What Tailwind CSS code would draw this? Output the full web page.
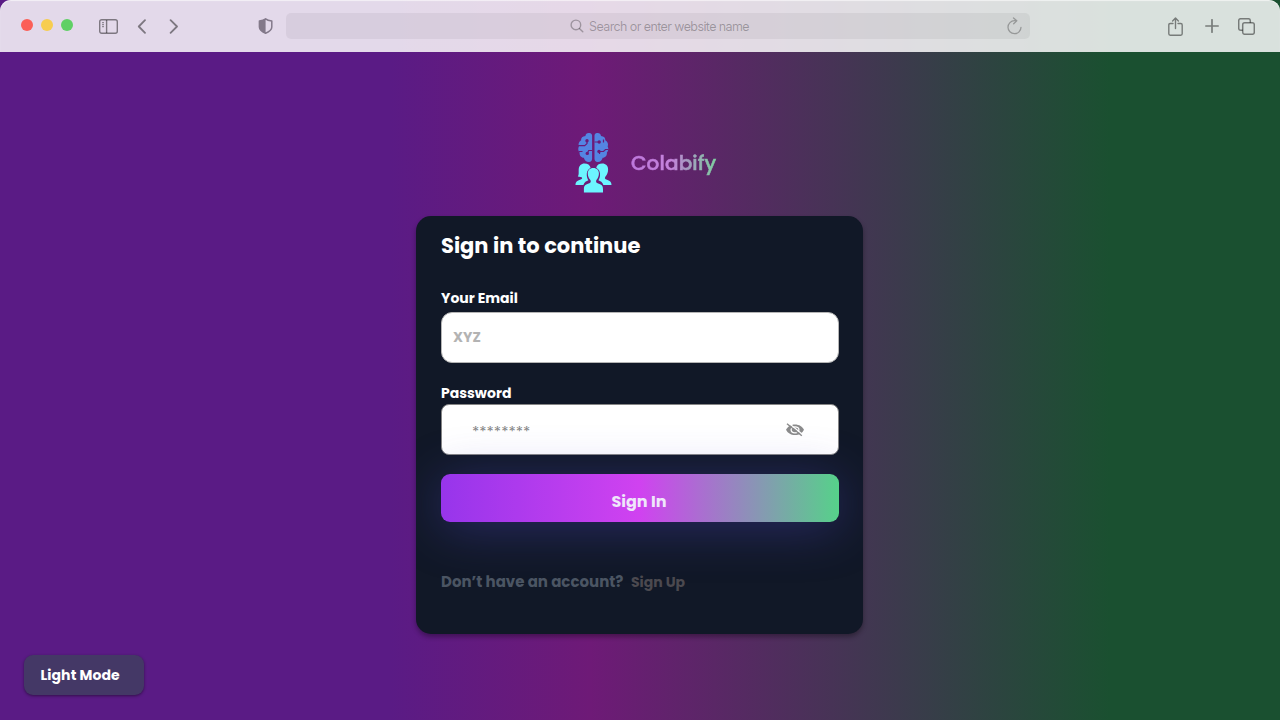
<!DOCTYPE html>
<html lang="en">
<head>
<meta charset="utf-8">
<title>Colabify</title>
<script src="https://cdn.jsdelivr.net/npm/@tailwindcss/browser@4"></script>
</head>
<body class="w-[1280px] h-[720px] overflow-hidden flex flex-col font-['Poppins','Inter',sans-serif] bg-[linear-gradient(90deg,#5a1b85_0px,#5a1b85_390px,#6e1a77_590px,#1a5030_1110px)]">
  <header class="h-[52px] shrink-0 flex items-center rounded-t-[11px] bg-[#fcfafc]/85 shadow-[inset_0_1px_1px_#ffffff99] text-black/45">
    <div class="flex gap-2 ml-[21px] mb-[3px]">
      <span class="size-3 rounded-full bg-[#fb5f57]"></span>
      <span class="size-3 rounded-full bg-[#f7cd50]"></span>
      <span class="size-3 rounded-full bg-[#5fd065]"></span>
    </div>
    <svg class="ml-[26px] w-[19px] h-[15px]" viewBox="0 0 19 15" fill="none" stroke="currentColor" stroke-width="1.4"><rect x=".7" y=".7" width="17.6" height="13.6" rx="2"/><path d="M7.6 1v13"/><path d="M3 3.7h2M3 5.7h2M3 7.7h2" stroke-width="1"/></svg>
    <svg class="ml-[19px] w-[9px] h-[15px]" viewBox="0 0 9 15" fill="none" stroke="currentColor" stroke-width="1.800" stroke-linecap="round" stroke-linejoin="round"><path d="M8 1.200 1.800 7.500 8 13.800"/></svg>
    <svg class="ml-[23px] w-[9px] h-[15px]" viewBox="0 0 9 15" fill="none" stroke="currentColor" stroke-width="1.800" stroke-linecap="round" stroke-linejoin="round"><path d="M1.600 1.200 8 7.500l-6.400 6.300"/></svg>
    <svg class="ml-[80px] w-[15px] h-[16px]" viewBox="-.6 0 15 16"><path d="M7 .8C5.600 1.900 3 2.600.8 2.900V9c0 3 3 4.900 6.200 6.300C10.200 13.900 13.200 12 13.200 9V2.900C11 2.600 8.400 1.900 7 .8Z" fill="none" stroke="#83798a" stroke-width="1.500" stroke-linejoin="round"/><path d="M7 .8C5.600 1.900 3 2.600.8 2.900V9c0 3 3 4.900 6.200 6.300Z" fill="#83798a"/></svg>
    <div class="ml-[13px] w-[744px] h-[26px] rounded-[5px] bg-black/5 flex items-center text-black/28">
      <svg class="ml-[284px] w-[14px] h-[14px]" viewBox="0 0 14 14" fill="none" stroke="currentColor" stroke-width="1.400" stroke-linecap="round"><circle cx="5.900" cy="5.900" r="4.800"/><path d="m9.400 9.400 3.400 3.400"/></svg>
      <span class="ml-[5px] mt-px w-[163px] whitespace-nowrap text-[12.500px] leading-4 font-normal font-['Inter',sans-serif] tracking-[-0.600px]">Search or enter website name</span>
      <svg class="ml-auto mr-[8px] w-[15px] h-[18px]" viewBox="0 0 15 18" fill="none" stroke="currentColor" stroke-width="1.300" stroke-linecap="round" stroke-linejoin="round"><path d="M14 10.300A6.500 6.500 0 1 1 7.500 3.700h2.200M6.500.9l3.300 2.800-3.100 3"/></svg>
    </div>
    <svg class="ml-[138px] w-[15px] h-[19px]" viewBox="0 0 15 19" fill="none" stroke="currentColor" stroke-width="1.400" stroke-linecap="round" stroke-linejoin="round"><path d="M5 6.500H2.200Q.8 6.500.8 7.900v8.900q0 1.400 1.400 1.400h10.600q1.400 0 1.400-1.400V7.900q0-1.400-1.400-1.400H10M7.500 11.500V1.200M4.600 3.900l2.900-2.900 2.900 2.900"/></svg>
    <svg class="ml-[22px] w-[14px] h-[14px]" viewBox="0 0 14 14" fill="none" stroke="currentColor" stroke-width="1.700" stroke-linecap="round"><path d="M7 .8v12.400M.8 7h12.400"/></svg>
    <svg class="ml-[19px] w-[17px] h-[17px]" viewBox="0 0 17 17" fill="none" stroke="currentColor" stroke-width="1.500"><rect x="4.700" y="4.700" width="11.600" height="11.600" rx="2"/><path d="M4.700 12.300H2.700q-2 0-2-2V2.700q0-2 2-2h7.600q2 0 2 2v2"/></svg>
  </header>

  <main class="flex-1 flex flex-col">
    <div class="h-[62px] mt-[79px] ml-[574px] flex">
      <svg class="w-[39px] h-[62px]" viewBox="0 0 39 62">
        <g fill="#5485e2">
          <path d="M18.100 4.500C18 2.500 16.300 1.600 14.700 2 12.800 2 11.600 3.200 11.400 4.900 8.500 5 6.800 6.800 7.100 9.300 4.800 10.600 4 13.200 4.900 15.500 3.800 17.600 4.200 20 5.600 21.400 5.300 24.300 7.100 26.500 9.800 26.700 10.600 29.600 12.700 31.300 15 31.100 17 31.100 18.100 29.600 18.100 27.800Z"/>
          <path d="M20.500 4.500C20.600 2.500 22 1.600 23.700 2c1.900 0 3.100 1.200 3.300 2.900 2.900.1 4.600 1.900 4.300 4.400 2.400 1.300 3.300 3.900 2.400 6.200 1.100 2.100.7 4.500-.8 5.900.3 2.900-1.500 5.100-4.200 5.300-.8 2.900-2.800 4.600-5.100 4.400-2 0-3.100-1.500-3.100-3.300Z"/>
        </g>
        <g fill="none" stroke="#6a1a78" stroke-width="1.200"><path d="M4 14.600h6.700l2.300-2V10M18.100 19.500h-3.400l-1.200 2.500M20.500 11h4M29.500 8.500v3M34.500 18.500h-3l-2 2h-4v2.500M5 20.500h3.500"/></g>
        <g fill="#6a1a78"><circle cx="13" cy="9.800" r="1.700"/><circle cx="13.300" cy="22.400" r="1.700"/><circle cx="25.200" cy="11" r="1.700"/><circle cx="25" cy="20.400" r="1.700"/></g>
        <g fill="#6cf5ff">
          <path d="M10.500 32.500c3.200 0 5.500 1.600 6.100 4.200-3 1.600-4.100 4.500-3.800 7.800.1 1.900.7 3.400 1.600 4.700-1.900.9-4.200 1.800-5 4.800H1.500c0-3.300 1.500-4.500 5.200-5.600 1.600-.5 1.800-1.300 1-2.200l-3.900-.7c1.400-1.900.7-4.500.9-7.200.3-3.600 2.400-5.800 5.800-5.800Z"/>
          <path d="M28.300 32.500c-3.200 0-5.500 1.600-6.100 4.200 3 1.600 4.100 4.500 3.800 7.800-.1 1.900-.7 3.400-1.600 4.700 1.900.9 4.200 1.800 5 4.800h8.100c0-3.300-1.500-4.500-5.200-5.600-1.700-.5-1.700-1.700-.8-3 1.700-1.700 2.600-4 2.600-7.100 0-3.600-2.400-5.800-5.800-5.800Z"/>
          <path d="M19.300 37c3.700 0 5.800 2.300 5.600 5.800-.1 2.500-.9 4.400-2.300 5.900-1 1.500-.6 2.900 1 3.500 3.900 1.300 5.400 2.100 5.400 6v3.300H9.900v-3.300c0-3.900 1.500-4.700 5.400-6 1.600-.6 1.900-2 .9-3.500-1.500-1.500-2.300-3.400-2.400-5.900-.2-3.500 1.900-5.800 5.500-5.800Z"/>
        </g>
      </svg>
      <div class="ml-[18px] mt-[17px] w-[90px] h-[32px] text-[20px] leading-[30px] font-medium tracking-[0.150px] bg-[linear-gradient(90deg,#bd78dc_0px,#c583dc_40px,#a69bc0_56px,#7ed1a0_86px)] bg-clip-text text-transparent [-webkit-text-stroke:0.6px_transparent]">Colabify</div>
    </div>

    <section class="mt-[23px] ml-[416px] w-[447px] h-[418px] overflow-clip rounded-[15px] bg-[#111827] px-[25px] flex flex-col text-white font-bold shadow-[0_3px_5px_#00000055]">
      <h1 class="mt-[14px] text-[21px] leading-8 whitespace-nowrap">Sign in to continue</h1>
      <label class="mt-[26px] text-[14px] leading-5">Your Email</label>
      <div class="mt-[4px] h-[51px] w-[398px] rounded-[11px] border border-[#b5b5b5] bg-white flex items-center pl-[11px] text-[14px] text-[#b3b3b3]"><span>XYZ</span></div>
      <label class="mt-[20px] text-[14px] leading-5">Password</label>
      <div class="mt-[1px] h-[51px] w-[398px] rounded-[8px] border border-[#858585] bg-white flex items-center pl-[30px] text-[#858585]">
        <span class="mt-[5px] text-[15px] font-normal">********</span>
        <svg class="ml-auto mr-[33px] w-[20px] h-[14px]" viewBox="0 0 20 14"><path d="M10 1.500C5.800 1.500 2.500 3.700 1 6.800c1.500 3.100 4.800 5.300 9 5.300s7.500-2.200 9-5.300c-1.500-3.100-4.800-5.300-9-5.300Z" fill="#8b8b8b"/><ellipse cx="10" cy="6.800" rx="3.900" ry="3" fill="none" stroke="white" stroke-width="1.300"/><path d="M3.300-.2 18.500 12.300" stroke="white" stroke-width="1.300"/><path d="M2 .7 16.800 12.700" stroke="#8b8b8b" stroke-width="1.400"/></svg>
      </div>
      <button class="mt-[19px] h-[48px] w-[398px] shrink-0 rounded-[9px] bg-[linear-gradient(90deg,#9735eb,#d042f0_50%,#56d18a)] shadow-[0_6px_50px_#4d47c366] text-[16px] text-[#efe6fa] pt-[7px] pr-[2px]">Sign In</button>
      <p class="mt-[50px] flex text-[15px] leading-5 text-[#4b5563]"><span class="w-[190px] whitespace-nowrap">Don’t have an account?</span><a class="text-[14px] text-[#4b494f]">Sign Up</a></p>
    </section>

    <button class="mt-[21px] ml-6 w-[120px] h-10 rounded-[9px] bg-[#443866] shadow-[0_1px_3px_#00000070] text-left pl-[16.500px] text-[14px] font-bold tracking-[0.100px] text-white">Light Mode</button>
  </main>
</body>
</html>
